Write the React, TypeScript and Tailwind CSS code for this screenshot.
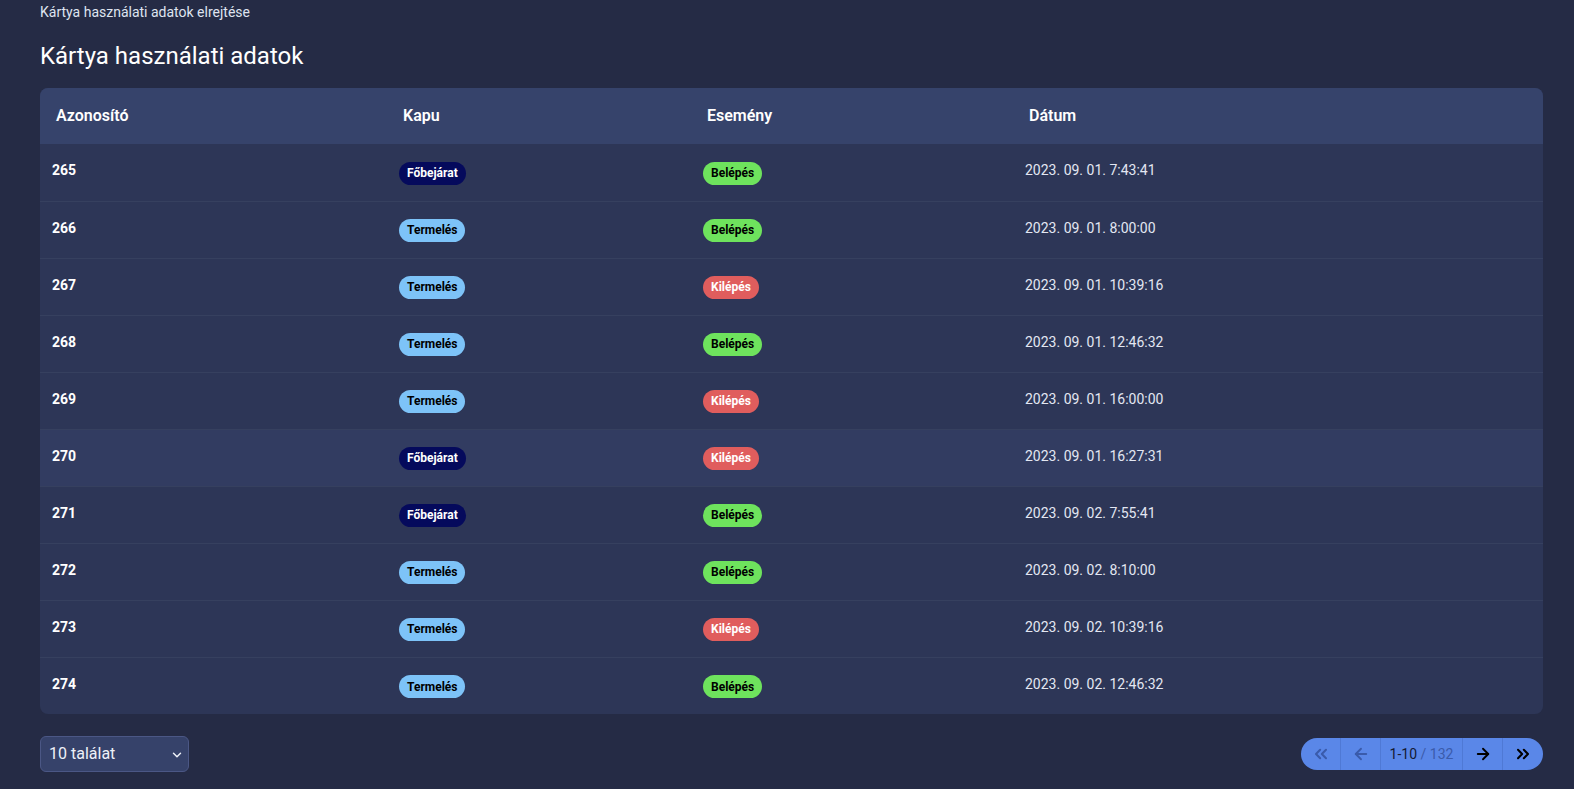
import React from 'react';
import { ChevronDown, ChevronsLeft, ChevronsRight, ArrowLeft, ArrowRight } from 'lucide-react';

type Gate = 'Főbejárat' | 'Termelés';
type Ev = 'Belépés' | 'Kilépés';

const rows: { id: number; gate: Gate; ev: Ev; date: string }[] = [
    { id: 265, gate: 'Főbejárat', ev: 'Belépés', date: '2023. 09. 01. 7:43:41' },
    { id: 266, gate: 'Termelés', ev: 'Belépés', date: '2023. 09. 01. 8:00:00' },
    { id: 267, gate: 'Termelés', ev: 'Kilépés', date: '2023. 09. 01. 10:39:16' },
    { id: 268, gate: 'Termelés', ev: 'Belépés', date: '2023. 09. 01. 12:46:32' },
    { id: 269, gate: 'Termelés', ev: 'Kilépés', date: '2023. 09. 01. 16:00:00' },
    { id: 270, gate: 'Főbejárat', ev: 'Kilépés', date: '2023. 09. 01. 16:27:31' },
    { id: 271, gate: 'Főbejárat', ev: 'Belépés', date: '2023. 09. 02. 7:55:41' },
    { id: 272, gate: 'Termelés', ev: 'Belépés', date: '2023. 09. 02. 8:10:00' },
    { id: 273, gate: 'Termelés', ev: 'Kilépés', date: '2023. 09. 02. 10:39:16' },
    { id: 274, gate: 'Termelés', ev: 'Belépés', date: '2023. 09. 02. 12:46:32' },
];

const gateClass: Record<Gate, string> = {
    'Főbejárat': 'bg-[#050a5c] text-white',
    'Termelés': 'bg-[#7dc3f8] text-black',
};

const evClass: Record<Ev, string> = {
    'Belépés': 'bg-[#6ee35d] text-black',
    'Kilépés': 'bg-[#e05d5d] text-white',
};

const Badge = ({ className, children }: { className: string; children: React.ReactNode }) => (
    <span className={`inline-flex items-center h-[23px] px-2 rounded-full text-xs font-bold ${className}`}>
        {children}
    </span>
);

const App: React.FC = () => {
    return (
        <div
            className="min-h-[789px] bg-[#252b45] text-[#e8ecf6] pl-10 pr-[31px]"
            style={{ fontFamily: 'Roboto, "Noto Sans", sans-serif' }}
        >
            <div className="pt-[3px] text-sm leading-[18px] text-[#dfe4f0]">Kártya használati adatok elrejtése</div>
            <h1 className="mt-[20px] text-2xl leading-[30px] text-white">Kártya használati adatok</h1>

            {/* Table */}
            <div className="mt-[17px] rounded-lg overflow-hidden bg-[#2d3657]">
                <table className="w-full table-fixed border-collapse">
                    <colgroup>
                        <col className="w-[347px]" />
                        <col className="w-[304px]" />
                        <col className="w-[322px]" />
                        <col />
                    </colgroup>
                    <thead>
                        <tr className="bg-[#36436b] h-14">
                            {['Azonosító', 'Kapu', 'Esemény', 'Dátum'].map((h) => (
                                <th key={h} className="px-4 text-left text-base font-semibold text-white">
                                    {h}
                                </th>
                            ))}
                        </tr>
                    </thead>
                    <tbody>
                        {rows.map((r, i) => (
                            <tr
                                key={r.id}
                                className={`h-[57px] ${i < rows.length - 1 ? 'border-b border-[#36405f]' : ''} ${r.id === 270 ? 'bg-[#323c61]' : ''}`}
                            >
                                <td className="px-3 pb-[4px] text-sm font-bold text-white">{r.id}</td>
                                <td className="px-3">
                                    <Badge className={gateClass[r.gate]}>{r.gate}</Badge>
                                </td>
                                <td className="px-3">
                                    <Badge className={evClass[r.ev]}>{r.ev}</Badge>
                                </td>
                                <td className="px-3 pb-[4px] text-sm text-[#e3e7f2]">{r.date}</td>
                            </tr>
                        ))}
                    </tbody>
                </table>
            </div>

            {/* Footer */}
            <div className="mt-[22px] flex items-center justify-between">
                <div className="relative w-[149px] h-[36px] rounded-md border border-[#4b5785] bg-[#36426a] flex items-center pl-2 text-base text-[#eef1f8]">
                    10 találat
                    <ChevronDown className="absolute right-[4px] top-[11px] w-[14px] h-[14px]" strokeWidth={2.5} />
                </div>
                <div className="flex items-center h-8 rounded-full bg-[#5a87e8] overflow-hidden">
                    <div className="w-10 h-full flex items-center justify-center border-r border-[#4f79d5] text-[#3a5bab]">
                        <ChevronsLeft className="w-5 h-5" strokeWidth={2.5} />
                    </div>
                    <div className="w-10 h-full flex items-center justify-center border-r border-[#4f79d5] text-[#3a5bab]">
                        <ArrowLeft className="w-[18px] h-[18px]" strokeWidth={2.5} />
                    </div>
                    <div className="w-[82px] h-full flex items-center justify-center border-r border-[#4f79d5] text-sm">
                        <span className="text-[#141a33]">1-10</span>
                        <span className="text-[#3a5bab]">&nbsp;/ 132</span>
                    </div>
                    <div className="w-10 h-full flex items-center justify-center border-r border-[#4f79d5] text-black">
                        <ArrowRight className="w-[18px] h-[18px]" strokeWidth={2.5} />
                    </div>
                    <div className="w-10 h-full flex items-center justify-center text-black">
                        <ChevronsRight className="w-5 h-5" strokeWidth={2.5} />
                    </div>
                </div>
            </div>
        </div>
    );
};

export default App;
